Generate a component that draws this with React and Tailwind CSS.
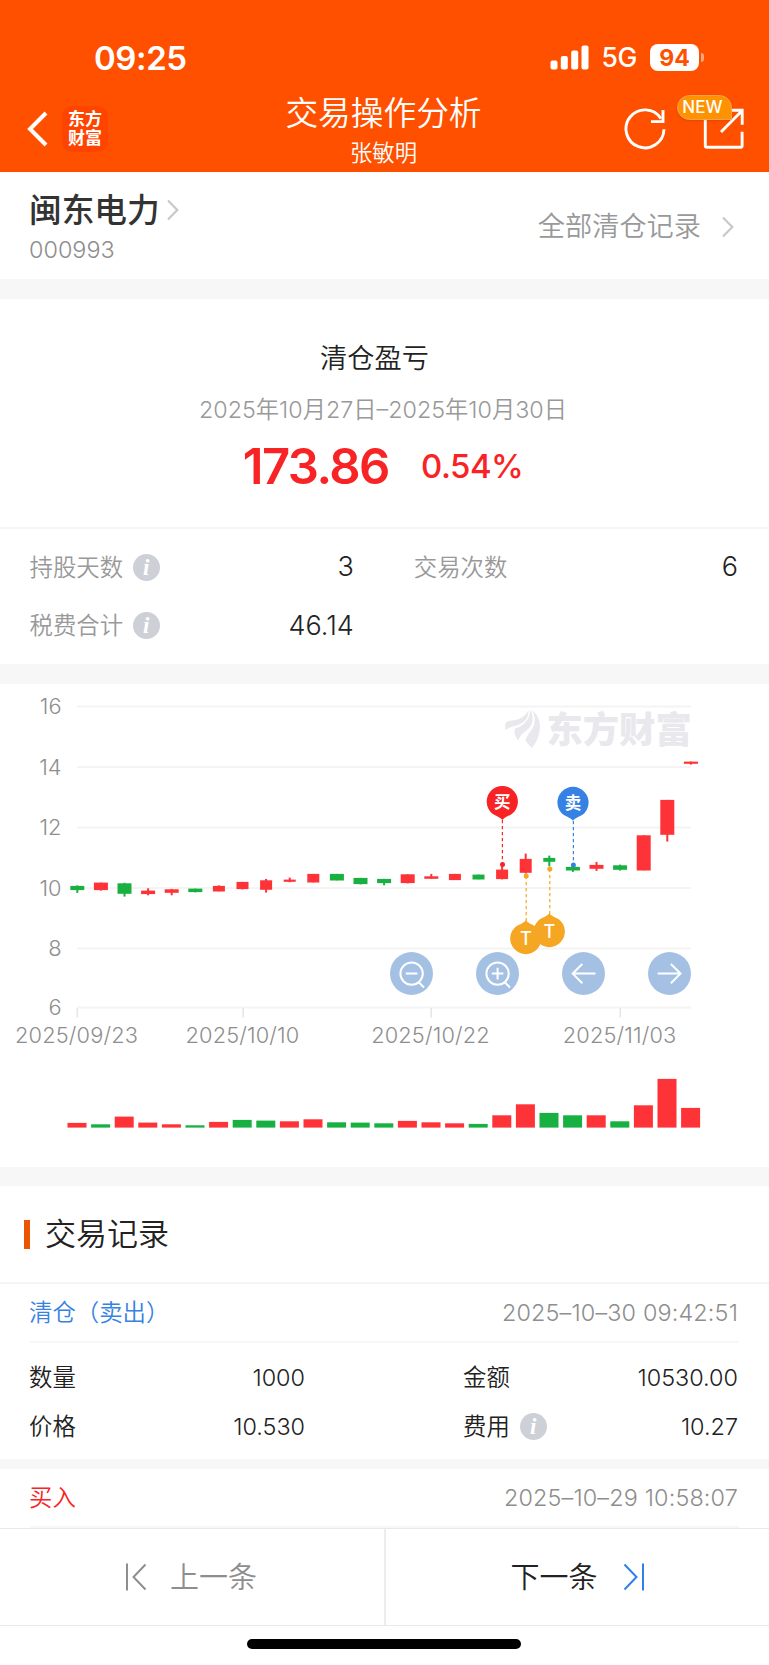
const RED = '#fe3338'
const GREEN = '#18b141'
const STEP = 23.6

// [up, open/close top, bottom, wick top, wick bottom], y in chart pixels
const candles = [
  [0, 22.3, 26.3, 21.8, 29.3],
  [1, 19, 26.3, 19, 27],
  [0, 19.7, 30, 19.2, 33],
  [1, 27, 30.3, 24.7, 31.7],
  [1, 25.7, 29, 25.3, 31.7],
  [0, 25, 28.3, 25, 28.8],
  [1, 22.3, 27.7, 21.8, 27.7],
  [1, 18.3, 25.3, 18.3, 25.8],
  [1, 16.7, 26, 15.3, 29],
  [1, 16, 18, 14, 18.7],
  [1, 10.3, 18.7, 10.3, 18.7],
  [0, 10.3, 16.7, 10.3, 16.7],
  [0, 14.3, 20.3, 14.3, 20.8],
  [0, 15.3, 19.3, 15.3, 21.7],
  [1, 10.7, 19.3, 10.7, 19.8],
  [1, 12.7, 15, 10.3, 15],
  [1, 10.3, 16.3, 10.3, 16.3],
  [0, 11, 15.7, 11, 15.7],
  [1, 6, 15.3, 2.7, 15.8],
  [1, -4.7, 9, -10, 10],
  [0, -5.7, -2, -8, 2.7],
  [0, 3.3, 6.7, 2, 8.3],
  [1, 1.3, 5, -1.7, 7.3],
  [0, 1.7, 6, 1, 7],
  [1, -28.3, 6.7, -28.3, 6.7],
  [1, -63.7, -29, -63.7, -22],
  [1, -102, -100, -102, -99],
]

// [up, bar height]
const volumes = [
  [1, 4.7], [0, 3.3], [1, 11], [1, 5], [1, 3.3], [0, 2.3], [1, 5.7], [0, 7.7], [0, 7],
  [1, 6.3], [1, 8.3], [0, 5.3], [0, 5], [0, 4.3], [1, 6.7], [1, 5.3], [1, 4.3], [0, 3.7],
  [1, 12.3], [1, 23.3], [0, 14.7], [0, 12.3], [1, 12.3], [0, 6.3], [1, 22.3], [1, 48.7], [1, 19.7],
]

const yTicks = [
  [16, 22.5], [14, 83], [12, 143.5], [10, 204], [8, 264.5], [6, 323.5],
]

const xTicks = [
  ['2025/09/23', 77.3], ['2025/10/10', 243.2], ['2025/10/22', 431.2], ['2025/11/03', 620.3],
]

function Info() {
  return (
    <svg width="27" height="27" viewBox="0 0 27 27" className="ml-[10px] shrink-0">
      <circle cx="13.5" cy="13.5" r="13.5" fill="#cdd0d6" />
      <text x="13.2" y="21" textAnchor="middle" fontFamily="Liberation Serif, serif" fontStyle="italic" fontWeight="700" fontSize="23" fill="#fff">i</text>
    </svg>
  )
}

function Chevron() {
  return (
    <svg width="12" height="22" viewBox="0 0 12 22" fill="none" stroke="#c8c8c8" strokeWidth="2.2">
      <path d="M1 1.5 10.3 11 1 20.5" />
    </svg>
  )
}

function StatusBar() {
  return (
    <div className="flex h-[88px] items-end justify-between pl-[94px] pr-[65px] pb-[10px]">
      <div className="text-[33px] leading-[40px] font-semibold tracking-[-0.4px]">09:25</div>
      <div className="flex items-center h-[41px]">
        <svg width="40" height="25" viewBox="0 0 40 25" fill="#fff">
          <rect x="0.5" y="15.5" width="7" height="9" rx="2" />
          <rect x="10.8" y="11" width="7" height="13.5" rx="2" />
          <rect x="21.2" y="5.5" width="7" height="19" rx="2" />
          <rect x="31.5" y="0.5" width="7" height="24" rx="2" />
        </svg>
        <span className="ml-[11px] text-[26.5px] font-medium tracking-[-0.3px]">5G</span>
        <div className="ml-[13px] flex h-[27px] w-[49px] items-center justify-center rounded-[8px] bg-white pt-px text-[23px] font-bold text-[#ff5000]">94</div>
        <div className="ml-[1.5px] h-[9px] w-[3.5px] rounded-r-full bg-white/50" />
      </div>
    </div>
  )
}

function NavBar() {
  return (
    <div className="flex h-[84px] items-start justify-between pl-[27px] pr-[24px]">
      <div className="flex w-[198px] items-center pt-[18px]">
        <svg width="21" height="36" viewBox="0 0 21 36" fill="none" stroke="#fff" strokeWidth="4">
          <path d="M19 2 3 18l16 16" />
        </svg>
        <div className="ml-[14px] grid h-[46px] w-[46px] place-content-center rounded-[10px] bg-[#ff4400] text-center text-[17px] leading-[19.5px] font-bold">
          <div>东方</div>
          <div>财富</div>
        </div>
      </div>
      <div className="flex flex-col items-center text-center">
        <h1 className="-ml-[3px] text-[32.7px] leading-[50px] font-[350]">交易操作分析</h1>
        <div className="-ml-[3px] mt-px text-[22.4px] leading-[27px] font-[350]">张敏明</div>
      </div>
      <div className="relative flex w-[200px] justify-end pt-[18px]">
        <svg width="44" height="44" viewBox="0 0 44 44" fill="none" stroke="#fff" strokeWidth="2.9">
          <path d="M41 23.3A19 19 0 1 1 38 12.6" />
          <path d="M40 4v11.6H28" />
        </svg>
        <svg width="44" height="44" viewBox="0 0 44 44" fill="none" stroke="#fff" strokeWidth="2.9" className="ml-[34.5px]">
          <path d="M4.3 12v28.3q0 1 1 1h34.8q1 0 1-1V25.7" />
          <path d="M30 4.3h11.2v14.4M41 4.8 20 26" />
        </svg>
        <div className="absolute top-[6.5px] right-[13.5px] flex h-[25px] w-[55px] items-center justify-center rounded-full rounded-br-[2px] border border-[#ffa04d] bg-[#ff9200] pr-[3px] pt-px text-[17px] font-medium tracking-[0.1px] shadow-sm">
          NEW
        </div>
      </div>
    </div>
  )
}

function StockHeader() {
  return (
    <div className="flex h-[107px] items-center justify-between bg-white pl-[29px] pr-[30px]">
      <div className="pt-[3px]">
        <div className="flex items-center">
          <h2 className="text-[32.7px] leading-[42px] font-medium text-[#333]">闽东电力</h2>
          <span className="ml-[7px] -mt-[1px]"><Chevron /></span>
        </div>
        <div className="mt-[4px] text-[23.4px] leading-[30px] font-light text-[#8e8e8e]">000993</div>
      </div>
      <div className="flex items-center pr-[5px] pt-[3px] text-[27.2px] font-[350] text-[#999]">
        全部清仓记录
        <span className="ml-[21px]"><Chevron /></span>
      </div>
    </div>
  )
}

function Summary() {
  return (
    <div className="bg-white">
      <div className="flex h-[228px] flex-col items-center pt-[40px]">
        <div className="-ml-[20px] text-[27.2px] leading-[40px] font-[350] text-[#222]">清仓盈亏</div>
        <div className="mt-[13px] -ml-[3px] text-[23.3px] leading-[36px] font-[350] text-[#999]">2025年10月27日–2025年10月30日</div>
        <div className="mt-[9px] -ml-[3px] flex h-[60px] items-center text-[#f82324]">
          <span className="text-[49px] font-semibold tracking-[-1.5px]">173.86</span>
          <span className="ml-[32px] text-[33px] font-medium tracking-[-0.5px]">0.54%</span>
        </div>
      </div>
      <div className="grid h-[137px] grid-cols-2 content-start gap-x-[60px] border-t-2 border-[#f5f5f5] pl-[29.5px] pr-[31px] pt-[9px] text-[27px] font-[350] text-[#222]">
        <Stat label="持股天数" value="3" info />
        <Stat label="交易次数" value="6" />
        <Stat label="税费合计" value="46.14" info />
      </div>
    </div>
  )
}

function Stat({ label, value, info }) {
  return (
    <div className="flex h-[58.5px] items-center">
      <span className="text-[23.4px] text-[#999]">{label}</span>
      {info && <Info />}
      <span className="ml-auto">{value}</span>
    </div>
  )
}

function Pin({ x, y, color, label, down }) {
  return (
    <g>
      <path
        transform={`translate(${x} ${y}) scale(1 ${down ? 1 : -1})`}
        d="M0 18.3C-3 14.8-5.5 14.8-9.5 12.3A15.6 15.6 0 1 1 9.5 12.3C5.5 14.8 3 14.8 0 18.3Z"
        fill={color}
      />
      <text x={x} y={down ? y + 6 : y + 6.5} textAnchor="middle" fontSize={down ? 16.5 : 18} fontWeight={down ? 700 : 500} fill="#fff">{label}</text>
    </g>
  )
}

function KLineChart() {
  return (
    <svg width="769" height="483" viewBox="0 0 769 483" className="block" fontFamily="Inter, 'Noto Sans CJK SC', sans-serif">
      {yTicks.map(([v, y]) => (
        <g key={v}>
          <line x1="77" x2="691" y1={y} y2={y} stroke="#f4f4f5" strokeWidth="2" />
          <text x="61.5" y={y + 7.5} textAnchor="end" fontSize="21.8" fontWeight="300" fill="#8e8e8e">{v}</text>
        </g>
      ))}
      {xTicks.map(([d, x]) => (
        <g key={d}>
          <line x1={x} x2={x} y1="324" y2="333.5" stroke="#e6e6e6" strokeWidth="1.6" />
          <text x={x - 0.7} y="358.5" textAnchor="middle" fontSize="21.8" fontWeight="300" letterSpacing="0.15" fill="#8e8e8e">{d}</text>
        </g>
      ))}

      {/* watermark */}
      <g fill="#e8e8ed">
        <path d="M505.5 46C504.5 40 505.5 37.5 510 36.8C519 36 525.5 33 528.5 26C528.8 33 525.5 38.5 517.5 41.2C512 42.6 508.5 43.6 505.5 46Z" />
        <path d="M514.6 44.8C524 42 530.3 35 530.3 25.3C534 33 533.5 40.5 527.5 45.6C523.5 48.8 520 51.5 518.3 56.6C515.5 53.5 514 49.5 514.6 44.8Z" />
        <path d="M532.3 26.5C538 31 540.4 37 539.8 44.5C539 52.5 536.5 58.5 531.7 64L525.5 56.8C526 53.5 528 50.5 530.8 47C535.5 41 536 34 532.3 26.5Z" />
        <text x="546.5" y="59" fontSize="36.3" fontWeight="900">东方财富</text>
      </g>

      {candles.map(([up, top, bottom, high, low], i) => {
        const x = 77.3 + i * STEP
        const w = (i > 5 && i < 11) || (i > 15 && i < 21) ? 12 : 14
        return (
          <g key={i} fill={up ? RED : GREEN}>
            <rect x={x - w / 2} y={179.6 + top} width={w} height={bottom - top + 0.2} />
            <rect x={x - 1} y={179.6 + high} width="2" height={low - high} />
          </g>
        )
      })}

      {volumes.map(([up, h], i) => (
        <rect key={i} x={67.5 + i * STEP} y={443.6 - h} width="19" height={h} fill={up ? RED : GREEN} />
      ))}

      <g strokeWidth="1.2" strokeDasharray="3.2 2.8">
        <line x1="502.4" x2="502.4" y1="136" y2="180" stroke="#f82324" />
        <line x1="573.4" x2="573.4" y1="137" y2="180" stroke="#3682e4" />
        <line x1="526.2" x2="526.2" y1="192" y2="237" stroke="#f5a623" />
        <line x1="549.8" x2="549.8" y1="185" y2="230" stroke="#f5a623" />
      </g>
      <circle cx="502.5" cy="180.5" r="2.5" fill="#f82324" />
      <circle cx="573.4" cy="181" r="2.5" fill="#3682e4" />
      <circle cx="526.2" cy="192" r="2.5" fill="#f5a623" />
      <circle cx="549.8" cy="185" r="2.5" fill="#f5a623" />
      <Pin x={502.3} y={117.7} color="#f82324" label="买" down />
      <Pin x={573} y={118.5} color="#3682e4" label="卖" down />
      <Pin x={525.8} y={254.5} color="#f5a623" label="T" />
      <Pin x={549.3} y={247.5} color="#f5a623" label="T" />
    </svg>
  )
}

const controls = [
  ['缩小', 'M21.6 10.4a11.2 11.2 0 1 1 0 22.4a11.2 11.2 0 1 1 0-22.4M15.8 21.6h11.6M29 30.5l5 5'],
  ['放大', 'M21.6 10.4a11.2 11.2 0 1 1 0 22.4a11.2 11.2 0 1 1 0-22.4M15.8 21.6h11.6M21.6 15.8v11.6M29 30.5l5 5'],
  ['左移', 'M33.5 21.6H10.7M20.3 12l-9.6 9.6l9.6 9.6'],
  ['右移', 'M9.7 21.6h22.8M22.9 12l9.6 9.6l-9.6 9.6'],
]

function ChartPanel() {
  return (
    <div className="relative bg-white">
      <KLineChart />
      <div className="absolute top-[267.5px] left-[390px] flex gap-[42.8px]">
        {controls.map(([name, d]) => (
          <button key={name} aria-label={name} className="h-[43.2px] w-[43.2px] rounded-full bg-[#a4c1e4]">
            <svg width="43.2" height="43.2" viewBox="0 0 43.2 43.2" fill="none" stroke="#fff" strokeWidth="2">
              <path d={d} />
            </svg>
          </button>
        ))}
      </div>
    </div>
  )
}

function RecordHead({ type, time, color }) {
  return (
    <div className="mx-[30px] flex items-center justify-between border-b-2 border-[#f7f7f7] h-full">
      <span className={`-ml-px text-[23.4px] font-[350] ${color}`}>{type}</span>
      <span className="pr-px text-[23.4px] font-light tracking-[0.15px] text-[#8e8e8e]">{time}</span>
    </div>
  )
}

function Records() {
  return (
    <div className="bg-white">
      <div className="flex h-[98px] items-center border-b-2 border-[#f5f5f5] pl-[24px]">
        <div className="h-[29px] w-[6px] bg-[#ea5404]" />
        <h3 className="ml-[15px] pt-px text-[31px] font-[350] text-[#222]">交易记录</h3>
      </div>
      <div className="h-[59px]">
        <RecordHead type="清仓（卖出）" time="2025–10–30 09:42:51" color="text-[#3682e4]" />
      </div>
      <div className="grid h-[116px] grid-cols-[276px_275px] content-start justify-between pl-[29px] pr-[31px] pt-[10px] text-[23.4px] font-[350] text-[#222]">
        <div className="flex h-[49px] items-center justify-between"><span>数量</span><span>1000</span></div>
        <div className="flex h-[49px] items-center justify-between"><span>金额</span><span>10530.00</span></div>
        <div className="flex h-[49px] items-center justify-between"><span>价格</span><span>10.530</span></div>
        <div className="flex h-[49px] items-center"><span>费用</span><Info /><span className="ml-auto">10.27</span></div>
      </div>
      <div className="h-[10px] bg-[#f7f7f7]" />
      <div className="h-[59px]">
        <RecordHead type="买入" time="2025–10–29 10:58:07" color="text-[#f82324]" />
      </div>
    </div>
  )
}

function Footer() {
  return (
    <div className="bg-white">
      <div className="flex h-[98px] border-y border-[#e9e9e9] text-[29px] font-[350]">
        <button className="flex flex-1 items-center pl-[125px] text-[#8e8e8e]">
          <svg width="22" height="28" viewBox="0 0 22 28" fill="none" stroke="#8e8e8e" strokeWidth="2">
            <path d="M2 .5v27M20.5 1.5 8.5 14l12 12.5" />
          </svg>
          <span className="ml-[23px] pt-px">上一条</span>
        </button>
        <div className="w-[2px] bg-[#ededed]" />
        <button className="flex flex-1 items-center pl-[125px] text-[#222]">
          <span className="pt-px">下一条</span>
          <svg width="22" height="28" viewBox="0 0 22 28" fill="none" stroke="#2e80ea" strokeWidth="2" className="ml-[25px]">
            <path d="M20 .5v27M1.5 1.5l12 12.5l-12 12.5" />
          </svg>
        </button>
      </div>
      <div className="flex h-[39px] justify-center pt-[13px] pr-[1px]">
        <div className="h-[10px] w-[274px] rounded-full bg-black" />
      </div>
    </div>
  )
}

export default function App() {
  return (
    <div className="w-[769px] h-[1665px] overflow-hidden bg-[#f7f7f7] font-[Inter,'Noto_Sans_CJK_SC',sans-serif]">
      <header className="bg-[#ff5000] text-white">
        <StatusBar />
        <NavBar />
      </header>
      <StockHeader />
      <div className="h-[20px]" />
      <Summary />
      <div className="h-[20px]" />
      <ChartPanel />
      <div className="h-[19px]" />
      <Records />
      <Footer />
    </div>
  )
}
